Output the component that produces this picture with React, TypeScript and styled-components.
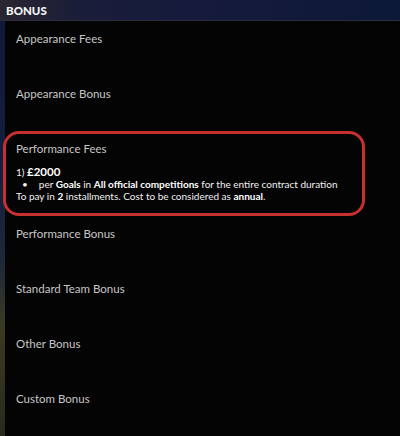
import React from 'react';
import styled, {createGlobalStyle} from 'styled-components';

const GlobalStyle = createGlobalStyle`
  html, body {
    margin: 0;
    padding: 0;
    height: 100%;
  }
  body {
    background: linear-gradient(180deg, #0f1838 0%, #14203f 40%, #1d2838 60%, #3a3a22 75%, #2a2a1c 100%);
    font-family: Lato, "Open Sans", sans-serif;
    overflow: hidden;
  }
`;

const Page = styled.div`
  display: flex;
  flex-direction: column;
  width: 400px;
  height: 436px;
`;

const Header = styled.div`
  height: 21px;
  flex: none;
  display: flex;
  align-items: center;
  padding-left: 6px;
  box-sizing: border-box;
  background: linear-gradient(90deg, #2a2530 0%, #1a1d3a 20%, #141a3c 60%, #0c1838 100%);
  border-bottom: 1px solid #2b2e3c;
`;

const Title = styled.h1`
  margin: 0;
  font-size: 11.5px;
  font-weight: 900;
  color: #f4f4f4;
`;

const Panel = styled.div`
  flex: 1;
  margin-left: 5px;
  background: #050405;
  display: flex;
  flex-direction: column;
`;

const Item = styled.div<{ $active?: boolean }>`
  box-sizing: border-box;
  padding: 11px 0 0 ${p => (p.$active ? 13 : 11)}px;
  height: ${p => (p.$active ? 85 : 55)}px;
  width: ${p => (p.$active ? '362px' : 'auto')};
  margin-left: ${p => (p.$active ? -2 : 0)}px;
  border-radius: ${p => (p.$active ? 16 : 0)}px;
  box-shadow: ${p => (p.$active ? 'inset 0 0 0 3px #c8302e' : 'none')};
`;

const Label = styled.div`
  font-size: 11.5px;
  line-height: 14px;
  color: #c6c6c6;
`;

const Details = styled.div`
  margin-top: 10px;
  font-size: 10px;
  line-height: 12px;
  color: #f0f0f0;

  b {
    font-weight: 700;
    color: #ffffff;
  }
`;

const Amount = styled.div`
  b {
    font-size: 11.5px;
  }
`;

const Bullet = styled.div`
  padding-left: 6px;
  display: flex;
  gap: 11px;

  &::before {
    content: '•';
  }
`;

const items = [
  'Appearance Fees',
  'Appearance Bonus',
  'Performance Fees',
  'Performance Bonus',
  'Standard Team Bonus',
  'Other Bonus',
  'Custom Bonus',
];

export default function App() {
  return (
    <Page>
      <GlobalStyle/>
      <Header>
        <Title>BONUS</Title>
      </Header>
      <Panel>
        {items.map(name => {
          const active = name === 'Performance Fees';
          return (
            <Item key={name} $active={active}>
              <Label>{name}</Label>
              {active && (
                <Details>
                  <Amount>1) <b>£2000</b></Amount>
                  <Bullet>
                    <span>per <b>Goals</b> in <b>All official competitions</b> for the entire contract duration</span>
                  </Bullet>
                  <div>To pay in <b>2</b> installments. Cost to be considered as <b>annual</b>.</div>
                </Details>
              )}
            </Item>
          );
        })}
      </Panel>
    </Page>
  );
}
